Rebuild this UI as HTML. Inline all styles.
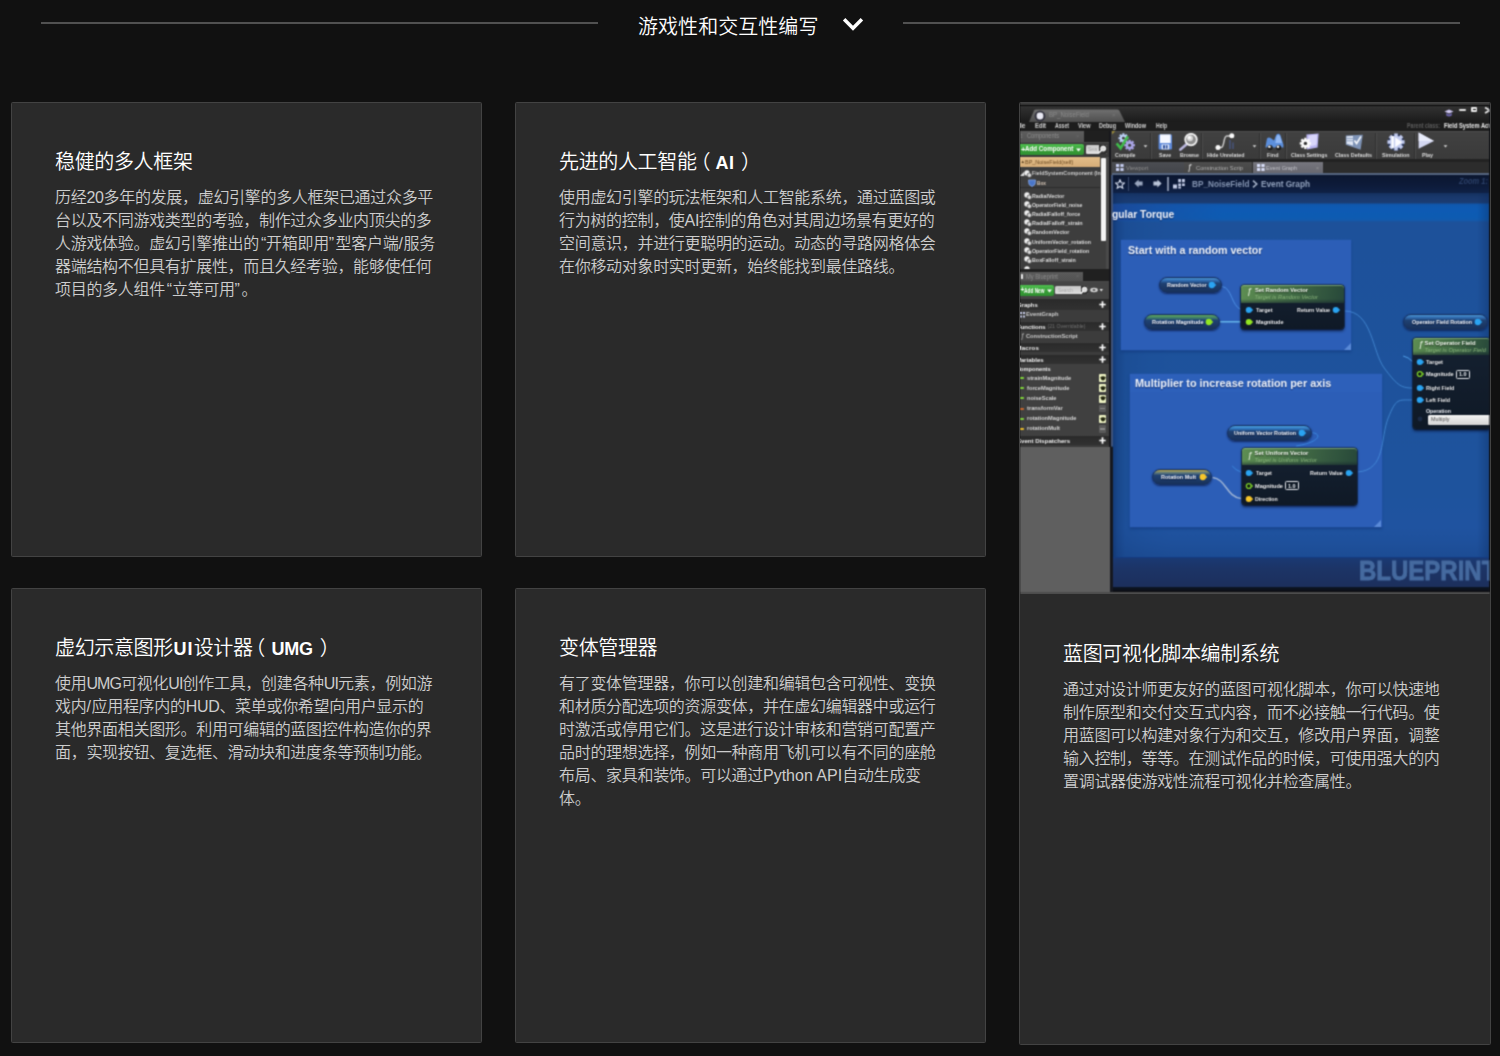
<!DOCTYPE html>
<html lang="zh-CN">
<head>
<meta charset="utf-8">
<title>游戏性和交互性编写</title>
<style>
*{box-sizing:border-box;margin:0;padding:0}
html,body{width:1500px;height:1056px;overflow:hidden;background:#111111}
body{position:relative;font-family:"Liberation Sans","Noto Sans CJK SC",sans-serif;color:#c9c9c9}
.hline{position:absolute;top:22px;height:2px;background:#515151}
.htitle{position:absolute;left:638px;top:12px;font-size:20px;line-height:30px;color:#fff;white-space:nowrap;letter-spacing:0.05px;font-weight:350}
.chev{position:absolute;left:841px;top:15px;width:24px;height:18px}
.card{position:absolute;background:#2a2a2a;border:1px solid #434343;border-radius:1.5px}
.t{position:absolute;left:43px;font-size:20px;line-height:30px;color:#fff;white-space:nowrap;letter-spacing:-0.35px;font-weight:350}
.t b{font-weight:bold;letter-spacing:-0.3px;font-size:18px}
.t .pl+b{margin-left:-0.8px}
.t .pl{position:relative;left:-7.5px}
.t .pr{position:relative;left:7.1px}
.l i{font-style:normal}
.l .q1{margin-left:1.9px;letter-spacing:-0.1px}
.l .q2{margin-right:1.9px;margin-left:-0.2px}
.l .s{letter-spacing:0.7px}
.l .n{letter-spacing:-0.85px}
.l .w{letter-spacing:0px}
.l{position:absolute;left:43px;font-size:16px;line-height:23px;white-space:nowrap;letter-spacing:-0.31px;color:#cdcdcd;font-weight:350}
#bp{position:absolute;left:0;top:0;width:470px;height:491px;overflow:hidden;background:#2a2a2a;font-family:"Liberation Sans",sans-serif;font-weight:bold}
#bpi{position:absolute;left:0;top:0;width:470px;height:491px;filter:url(#soft);will-change:transform}
#bpi>div,#bpi>span,#bpi>svg{position:absolute;display:block}
#bpi>span{white-space:nowrap}
</style>
</head>
<body>
<svg width="0" height="0" style="position:absolute"><defs><filter id="soft" x="0" y="0" width="100%" height="100%" color-interpolation-filters="sRGB"><feConvolveMatrix order="3" kernelMatrix="0.0439 0.1217 0.0439 0.1217 0.3377 0.1217 0.0439 0.1217 0.0439" divisor="1" edgeMode="duplicate" preserveAlpha="true"/></filter></defs></svg>
<!-- header -->
<div class="hline" style="left:41px;width:557px"></div>
<div class="hline" style="left:903px;width:557px"></div>
<div class="htitle">游戏性和交互性编写</div>
<svg class="chev" viewBox="0 0 24 18"><path d="M3.1 4.3 L12 13.3 L20.9 4.3" fill="none" stroke="#fff" stroke-width="3.5" stroke-linecap="butt" stroke-linejoin="miter"/></svg>

<!-- card 1 -->
<div class="card" id="c1" style="left:11px;top:102px;width:471px;height:455px">
  <div class="t" style="top:44px">稳健的多人框架</div>
  <div class="l" style="top:83px">历经20多年的发展，虚幻引擎的多人框架已通过众多平</div>
  <div class="l" style="top:106px">台以及不同游戏类型的考验，制作过众多业内顶尖的多</div>
  <div class="l" style="top:129px">人游戏体验。虚幻引擎推出的<i class="q1">“</i>开箱即用<i class="q2">”</i>型客户端<i class="s">/</i>服务</div>
  <div class="l" style="top:152px">器端结构不但具有扩展性，而且久经考验，能够使任何</div>
  <div class="l" style="top:175px">项目的多人组件<i class="q1">“</i>立等可用<i class="q2">”</i>。</div>
</div>

<!-- card 2 -->
<div class="card" id="c2" style="left:515px;top:102px;width:471px;height:455px">
  <div class="t" style="top:44px">先进的人工智能<span class="pl" style="left:-6.2px">（</span><b style="letter-spacing:0.7px">AI</b><span class="pr" style="left:6.2px">）</span></div>
  <div class="l" style="top:83px">使用虚幻引擎的玩法框架和人工智能系统，通过蓝图或</div>
  <div class="l" style="top:106px">行为树的控制，使AI控制的角色对其周边场景有更好的</div>
  <div class="l" style="top:129px">空间意识，并进行更聪明的运动。动态的寻路网格体会</div>
  <div class="l" style="top:152px">在你移动对象时实时更新，始终能找到最佳路线。</div>
</div>

<!-- card 3 -->
<div class="card" id="c3" style="left:11px;top:588px;width:471px;height:455px">
  <div class="t" style="top:44px">虚幻示意图形<b style="letter-spacing:1.1px;margin-left:0.6px">UI</b>设计器<span class="pl">（</span><b>UMG</b><span class="pr">）</span></div>
  <div class="l" style="top:83px">使用<i class="n">UMG</i>可视化<i class="n">UI</i>创作工具，创建各种<i class="n">UI</i>元素，例如游</div>
  <div class="l" style="top:106px">戏内<i class="s">/</i>应用程序内的HUD、菜单或你希望向用户显示的</div>
  <div class="l" style="top:129px">其他界面相关图形。利用可编辑的蓝图控件构造你的界</div>
  <div class="l" style="top:152px">面，实现按钮、复选框、滑动块和进度条等预制功能。</div>
</div>

<!-- card 4 -->
<div class="card" id="c4" style="left:515px;top:588px;width:471px;height:455px">
  <div class="t" style="top:44px">变体管理器</div>
  <div class="l" style="top:83px">有了变体管理器，你可以创建和编辑包含可视性、变换</div>
  <div class="l" style="top:106px">和材质分配选项的资源变体，并在虚幻编辑器中或运行</div>
  <div class="l" style="top:129px">时激活或停用它们。这是进行设计审核和营销可配置产</div>
  <div class="l" style="top:152px">品时的理想选择，例如一种商用飞机可以有不同的座舱</div>
  <div class="l" style="top:175px">布局、家具和装饰。可以通过<i class="w">Python API</i>自动生成变</div>
  <div class="l" style="top:198px">体。</div>
</div>

<!-- card 5 (tall) -->
<div class="card" id="c5" style="left:1019px;top:102px;width:472px;height:943px">
  <div id="bp"><div id="bpi">
<div style="left:0px;top:0px;width:470px;height:1.8px;background:#3c3c3c;"></div>
<div style="left:0px;top:1.7px;width:470px;height:1.5px;background:#030303;"></div>
<div style="left:0px;top:3px;width:470px;height:15.5px;background:linear-gradient(#323232,#1b1b1b);"></div>
<svg style="left:9px;top:6px" width="96" height="13" viewBox="0 0 96 13"><defs><linearGradient id="tg" x1="0" y1="0" x2="0" y2="1"><stop offset="0" stop-color="#707070"/><stop offset="1" stop-color="#4e4e4e"/></linearGradient></defs><path d="M0 13 L5 1.5 Q5.6 0.5 7 0.5 L88 0.5 Q89.6 0.5 90.4 1.8 L96 13 Z" fill="url(#tg)"/><circle cx="11" cy="7" r="3.4" fill="#e9e9f4"/><circle cx="11" cy="7" r="4.6" fill="none" stroke="#2a2a3a" stroke-width="1.4"/></svg>
<span style="left:29px;top:8.44px;font-size:6.5px;line-height:8.12px;color:#8a8a8a;font-weight:normal;transform-origin:0 50%;transform:scaleX(0.930);">BP_NoiseField</span>
<span style="left:92px;top:8.75px;font-size:6px;line-height:7.5px;color:#777;font-weight:normal;">×</span>
<div style="left:439px;top:5.8px;width:6.8px;height:2.2px;background:#e4e4e4;border-radius:1px;"></div>
<div style="left:451px;top:4px;width:6.2px;height:4.5px;background:#e9e9e9;border-radius:1px;"></div>
<div style="left:452.6px;top:6px;width:3.2px;height:1.2px;background:#1a1a1a;"></div>
<svg style="left:464px;top:3.6px" width="8" height="8" viewBox="0 0 8 8"><path d="M1 0.5 L6 3.2 L1 6" fill="none" stroke="#eee" stroke-width="1.6"/></svg>
<svg style="left:423.5px;top:5.5px" width="10" height="9" viewBox="0 0 10 9"><path d="M0.5 2.5 L5 0.5 L9.5 2.5 L5 4.6 Z" fill="#cfc8f2"/><path d="M2.2 4 L2.2 6.6 Q5 8.6 7.8 6.6 L7.8 4 L5 5.4 Z" fill="#6a62a8"/></svg>
<div style="left:0px;top:18.5px;width:470px;height:9.5px;background:#1d1d1d;"></div>
<span style="left:-2px;top:19.17px;font-size:6.6px;line-height:8.25px;color:#d4d4d4;letter-spacing:0.08px;">ile</span>
<span style="left:14.5px;top:19.17px;font-size:6.6px;line-height:8.25px;color:#d4d4d4;transform-origin:0 50%;transform:scaleX(0.882);">Edit</span>
<span style="left:34.5px;top:19.17px;font-size:6.6px;line-height:8.25px;color:#d4d4d4;transform-origin:0 50%;transform:scaleX(0.779);">Asset</span>
<span style="left:57.5px;top:19.17px;font-size:6.6px;line-height:8.25px;color:#d4d4d4;transform-origin:0 50%;transform:scaleX(0.838);">View</span>
<span style="left:79px;top:19.17px;font-size:6.6px;line-height:8.25px;color:#d4d4d4;transform-origin:0 50%;transform:scaleX(0.828);">Debug</span>
<span style="left:105px;top:19.17px;font-size:6.6px;line-height:8.25px;color:#d4d4d4;transform-origin:0 50%;transform:scaleX(0.832);">Window</span>
<span style="left:135.5px;top:19.17px;font-size:6.6px;line-height:8.25px;color:#d4d4d4;transform-origin:0 50%;transform:scaleX(0.769);">Help</span>
<span style="left:387px;top:19.3px;font-size:6.4px;line-height:8px;color:#5e5e5e;transform-origin:0 50%;transform:scaleX(0.828);">Parent class:</span>
<span style="left:424px;top:19.17px;font-size:6.6px;line-height:8.25px;color:#ededed;transform-origin:0 50%;transform:scaleX(0.873);">Field System Actor</span>
<div style="left:0px;top:28px;width:91.6px;height:463px;background:#3e3e3e;"></div>
<div style="left:64px;top:28px;width:24.5px;height:12px;background:#1f1f1f;"></div>
<div style="left:0px;top:28px;width:64px;height:10.6px;background:linear-gradient(#5d5d5d,#535353);"></div>
<div style="left:0px;top:38.6px;width:88.5px;height:1.8px;background:#4a4a4a;"></div>
<span style="left:7px;top:29.4px;font-size:6.4px;line-height:8px;color:#8e8e8e;font-weight:normal;transform-origin:0 50%;transform:scaleX(0.882);">Components</span>
<span style="left:1px;top:29.65px;font-size:6px;line-height:7.5px;color:#aaa;font-weight:normal;">⁝</span>
<span style="left:56px;top:29.96px;font-size:5.5px;line-height:6.88px;color:#6a6a6a;font-weight:normal;">×</span>
<div style="left:0px;top:40.4px;width:88.5px;height:13.2px;background:#3a3a3a;"></div>
<div style="left:0px;top:41.2px;width:64px;height:11.1px;background:linear-gradient(#4fc04f,#3aa23a 45%,#2f8f31);border-radius:0 2px 2px 0;"></div>
<span style="left:1px;top:42.11px;font-size:7.5px;line-height:9.38px;color:#fff;">+</span>
<span style="left:4.5px;top:42.49px;font-size:6.9px;line-height:8.62px;color:#fff;transform-origin:0 50%;transform:scaleX(0.904);">Add Component</span>
<svg style="left:55.5px;top:45.3px" width="5" height="4" viewBox="0 0 5 4"><path d="M0 0.5 L5 0.5 L2.5 3.6 Z" fill="#fff"/></svg>
<div style="left:66px;top:42.4px;width:21.2px;height:8.8px;background:linear-gradient(#c9c9c9,#e2e2e2);border-radius:1.5px;"></div>
<span style="left:68px;top:43.4px;font-size:5.6px;line-height:7px;color:#a5a5a5;font-weight:normal;transform-origin:0 50%;transform:scaleX(0.903);">Sea</span>
<div style="left:78.6px;top:42.4px;width:8.6px;height:8.8px;background:#2e2e2e;border-radius:0 1.5px 1.5px 0;"></div>
<svg style="left:78.4px;top:42.4px" width="9" height="9" viewBox="0 0 9 9"><circle cx="5.2" cy="3.6" r="2.5" fill="#dcdcdc" stroke="#fff" stroke-width="1"/><path d="M3.4 5.4 L0.8 8" stroke="#fff" stroke-width="1.5"/></svg>
<div style="left:0px;top:54.4px;width:79.7px;height:9.4px;background:linear-gradient(#e2bd88,#d6ad78);"></div>
<span style="left:0.4px;top:56.39px;font-size:4.5px;line-height:5.62px;color:#5a4020;font-weight:normal;">▲</span>
<span style="left:4.5px;top:55.32px;font-size:6.2px;line-height:7.75px;color:#6b4a22;font-weight:normal;transform-origin:0 50%;transform:scaleX(0.885);">BP_NoiseField(self)</span>
<div style="left:0px;top:63.8px;width:79.7px;height:101.7px;background:#3d3d3d;"></div>
<div style="left:0px;top:84.2px;width:79.7px;height:1.2px;background:#2b2b2b;"></div>
<div style="left:80.8px;top:55.2px;width:5px;height:82.8px;background:#f4f4f4;border-radius:1px;"></div>
<div style="left:85.8px;top:54px;width:3.2px;height:111.5px;background:#4a4a4a;"></div>
<div style="left:87px;top:165.5px;width:2px;height:178.1px;background:#4d4d4d;"></div>
<div style="left:89px;top:28px;width:2.2px;height:463px;background:#17171c;"></div>
<span style="left:0.3px;top:67.97px;font-size:4.2px;line-height:5.25px;color:#ddd;font-weight:normal;">◢</span>
<svg style="left:4px;top:66.8px" width="8" height="8" viewBox="0 0 8 8"><circle cx="3" cy="3" r="2.7" fill="#f1f1f1"/><circle cx="5.4" cy="5.2" r="2.3" fill="#d6d6d6" stroke="#3d3d3d" stroke-width="0.7"/></svg>
<span style="left:12px;top:67.24px;font-size:5.7px;line-height:7.12px;color:#cfcfcf;transform-origin:0 50%;transform:scaleX(0.935);">FieldSystemComponent (In</span>
<svg style="left:8px;top:76.2px" width="8" height="8" viewBox="0 0 8 8"><path d="M0.5 1 L7.5 1 L7 5.4 L4 7.6 L1 5.4 Z" fill="#4a76c8" stroke="#86a8e8" stroke-width="0.8"/></svg>
<span style="left:17px;top:76.84px;font-size:5.7px;line-height:7.12px;color:#d8c8b8;transform-origin:0 50%;transform:scaleX(0.836);">Box</span>
<svg style="left:4px;top:88.8px" width="8" height="8" viewBox="0 0 8 8"><circle cx="3" cy="3" r="2.7" fill="#f1f1f1"/><circle cx="5.4" cy="5.2" r="2.3" fill="#d6d6d6" stroke="#3d3d3d" stroke-width="0.7"/></svg>
<span style="left:12px;top:89.74px;font-size:5.7px;line-height:7.12px;color:#dedede;transform-origin:0 50%;transform:scaleX(0.938);">RadialVector</span>
<svg style="left:4px;top:97.9px" width="8" height="8" viewBox="0 0 8 8"><circle cx="3" cy="3" r="2.7" fill="#f1f1f1"/><circle cx="5.4" cy="5.2" r="2.3" fill="#d6d6d6" stroke="#3d3d3d" stroke-width="0.7"/></svg>
<span style="left:12px;top:98.84px;font-size:5.7px;line-height:7.12px;color:#dedede;transform-origin:0 50%;transform:scaleX(0.913);">OperatorField_noise</span>
<svg style="left:4px;top:107px" width="8" height="8" viewBox="0 0 8 8"><circle cx="3" cy="3" r="2.7" fill="#f1f1f1"/><circle cx="5.4" cy="5.2" r="2.3" fill="#d6d6d6" stroke="#3d3d3d" stroke-width="0.7"/></svg>
<span style="left:12px;top:107.94px;font-size:5.7px;line-height:7.12px;color:#dedede;transform-origin:0 50%;transform:scaleX(0.941);">RadialFalloff_force</span>
<svg style="left:4px;top:116px" width="8" height="8" viewBox="0 0 8 8"><circle cx="3" cy="3" r="2.7" fill="#f1f1f1"/><circle cx="5.4" cy="5.2" r="2.3" fill="#d6d6d6" stroke="#3d3d3d" stroke-width="0.7"/></svg>
<span style="left:12px;top:116.94px;font-size:5.7px;line-height:7.12px;color:#dedede;transform-origin:0 50%;transform:scaleX(0.957);">RadialFalloff_strain</span>
<svg style="left:4px;top:125.4px" width="8" height="8" viewBox="0 0 8 8"><circle cx="3" cy="3" r="2.7" fill="#f1f1f1"/><circle cx="5.4" cy="5.2" r="2.3" fill="#d6d6d6" stroke="#3d3d3d" stroke-width="0.7"/></svg>
<span style="left:12px;top:126.34px;font-size:5.7px;line-height:7.12px;color:#dedede;transform-origin:0 50%;transform:scaleX(0.932);">RandomVector</span>
<svg style="left:4px;top:134.8px" width="8" height="8" viewBox="0 0 8 8"><circle cx="3" cy="3" r="2.7" fill="#f1f1f1"/><circle cx="5.4" cy="5.2" r="2.3" fill="#d6d6d6" stroke="#3d3d3d" stroke-width="0.7"/></svg>
<span style="left:12px;top:135.74px;font-size:5.7px;line-height:7.12px;color:#dedede;transform-origin:0 50%;transform:scaleX(0.927);">UniformVector_rotation</span>
<svg style="left:4px;top:143.9px" width="8" height="8" viewBox="0 0 8 8"><circle cx="3" cy="3" r="2.7" fill="#f1f1f1"/><circle cx="5.4" cy="5.2" r="2.3" fill="#d6d6d6" stroke="#3d3d3d" stroke-width="0.7"/></svg>
<span style="left:12px;top:144.84px;font-size:5.7px;line-height:7.12px;color:#dedede;transform-origin:0 50%;transform:scaleX(0.929);">OperatorField_rotation</span>
<svg style="left:4px;top:153.2px" width="8" height="8" viewBox="0 0 8 8"><circle cx="3" cy="3" r="2.7" fill="#f1f1f1"/><circle cx="5.4" cy="5.2" r="2.3" fill="#d6d6d6" stroke="#3d3d3d" stroke-width="0.7"/></svg>
<span style="left:12px;top:154.14px;font-size:5.7px;line-height:7.12px;color:#dedede;transform-origin:0 50%;transform:scaleX(0.941);">BoxFalloff_strain</span>
<svg style="left:4px;top:162.5px" width="8" height="3" viewBox="0 0 8 3"><circle cx="3" cy="3" r="2.7" fill="#f1f1f1"/></svg>
<div style="left:0px;top:165.5px;width:88.6px;height:13.5px;background:#202020;"></div>
<div style="left:0px;top:168.6px;width:63px;height:9.8px;background:linear-gradient(#5b5b5b,#525252);"></div>
<div style="left:0px;top:178.2px;width:88.6px;height:1.2px;background:#484848;"></div>
<div style="left:0.6px;top:171px;width:2.8px;height:5px;background:#e6e6e6;border-radius:0.6px;"></div>
<span style="left:6px;top:169.6px;font-size:6.4px;line-height:8px;color:#8c8c8c;font-weight:normal;transform-origin:0 50%;transform:scaleX(0.900);">My Blueprint</span>
<span style="left:56px;top:170.16px;font-size:5.5px;line-height:6.88px;color:#6a6a6a;font-weight:normal;">×</span>
<div style="left:0px;top:179.4px;width:88.6px;height:16.2px;background:#444;"></div>
<div style="left:0px;top:182px;width:34px;height:10.8px;background:linear-gradient(#4fc04f,#3aa23a 45%,#2f8f31);border-radius:0 2px 2px 0;"></div>
<span style="left:0.6px;top:183.44px;font-size:6.5px;line-height:8.12px;color:#fff;">+</span>
<span style="left:4px;top:183.56px;font-size:6.3px;line-height:7.88px;color:#fff;transform-origin:0 50%;transform:scaleX(0.761);">Add New</span>
<svg style="left:27px;top:186px" width="5" height="4" viewBox="0 0 5 4"><path d="M0 0.5 L5 0.5 L2.5 3.6 Z" fill="#fff"/></svg>
<div style="left:35.2px;top:183px;width:32.6px;height:8.2px;background:linear-gradient(#c6c6c6,#dedede);border-radius:1.5px;"></div>
<span style="left:38px;top:183.93px;font-size:5.4px;line-height:6.75px;color:#a8a8a8;font-weight:normal;transform-origin:0 50%;transform:scaleX(0.877);">Search</span>
<div style="left:60.6px;top:183px;width:7.2px;height:8.2px;background:#2c2c2c;border-radius:0 1.5px 1.5px 0;"></div>
<svg style="left:60.3px;top:183px" width="8" height="9" viewBox="0 0 8 9"><circle cx="4.6" cy="3.6" r="2.4" fill="#dcdcdc" stroke="#fff" stroke-width="1"/><path d="M3 5.3 L0.8 7.8" stroke="#fff" stroke-width="1.4"/></svg>
<svg style="left:70.4px;top:184.4px" width="14" height="6" viewBox="0 0 14 6"><ellipse cx="4" cy="3" rx="3.8" ry="2.2" fill="#d8d8d8"/><ellipse cx="4" cy="3" rx="1.6" ry="1.1" fill="#555"/><path d="M9.6 2 L13 2 L11.3 4.4 Z" fill="#e8e8e8"/></svg>
<div style="left:0px;top:196.4px;width:88.6px;height:10.2px;background:linear-gradient(#2a2a2a,#313131);"></div>
<span style="left:-3.5px;top:198.39px;font-size:6.1px;line-height:7.62px;color:#f0f0f0;transform-origin:0 50%;transform:scaleX(0.969);">Graphs</span>
<svg style="left:78.6px;top:198px" width="7" height="7" viewBox="0 0 7 7"><path d="M3.5 0.3 V6.7 M0.3 3.5 H6.7" stroke="#fff" stroke-width="1.7"/></svg>
<div style="left:0px;top:206.6px;width:88.6px;height:11px;background:#3c3c3c;"></div>
<svg style="left:0.2px;top:209.2px" width="5" height="6" viewBox="0 0 5 6"><path d="M0 0H2V2H0Z M3 0H5V2H3Z M0 3.4H2V5.6H0Z M3 3.4H5V5.6H3Z" fill="#c8cde8"/></svg>
<span style="left:6.4px;top:208.38px;font-size:5.8px;line-height:7.25px;color:#cdcdcd;transform-origin:0 50%;transform:scaleX(0.986);">EventGraph</span>
<div style="left:0px;top:218.6px;width:88.6px;height:9.2px;background:linear-gradient(#2a2a2a,#313131);"></div>
<span style="left:-3.5px;top:220.09px;font-size:6.1px;line-height:7.62px;color:#f0f0f0;transform-origin:0 50%;transform:scaleX(0.985);">Functions</span>
<svg style="left:78.6px;top:219.7px" width="7" height="7" viewBox="0 0 7 7"><path d="M3.5 0.3 V6.7 M0.3 3.5 H6.7" stroke="#fff" stroke-width="1.7"/></svg>
<span style="left:27.4px;top:220.35px;font-size:5.2px;line-height:6.5px;color:#707070;font-weight:normal;letter-spacing:0.04px;">(21 Overridable)</span>
<div style="left:0px;top:227.8px;width:88.6px;height:11.6px;background:#3c3c3c;"></div>
<span style="left:0.4px;top:229.02px;font-size:7px;line-height:8.75px;color:#bbb;font-weight:normal;font-style:italic;">ƒ</span>
<span style="left:6.4px;top:229.98px;font-size:5.8px;line-height:7.25px;color:#cdcdcd;transform-origin:0 50%;transform:scaleX(0.982);">ConstructionScript</span>
<div style="left:0px;top:240.2px;width:88.6px;height:8.6px;background:linear-gradient(#2a2a2a,#313131);"></div>
<span style="left:-3.5px;top:241.39px;font-size:6.1px;line-height:7.62px;color:#f0f0f0;letter-spacing:0.19px;">Macros</span>
<svg style="left:78.6px;top:241px" width="7" height="7" viewBox="0 0 7 7"><path d="M3.5 0.3 V6.7 M0.3 3.5 H6.7" stroke="#fff" stroke-width="1.7"/></svg>
<div style="left:0px;top:248.8px;width:88.6px;height:2.8px;background:#3c3c3c;"></div>
<div style="left:0px;top:251.6px;width:88.6px;height:9px;background:linear-gradient(#2a2a2a,#313131);"></div>
<span style="left:-3.5px;top:252.99px;font-size:6.1px;line-height:7.62px;color:#f0f0f0;transform-origin:0 50%;transform:scaleX(0.997);">Variables</span>
<svg style="left:78.6px;top:252.6px" width="7" height="7" viewBox="0 0 7 7"><path d="M3.5 0.3 V6.7 M0.3 3.5 H6.7" stroke="#fff" stroke-width="1.7"/></svg>
<div style="left:0px;top:260.6px;width:88.6px;height:72px;background:#404040;"></div>
<span style="left:-4.5px;top:262.32px;font-size:6.2px;line-height:7.75px;color:#ececec;transform-origin:0 50%;transform:scaleX(0.916);">Components</span>
<div style="left:-0.4px;top:273.8px;width:4.6px;height:2.2px;background:#7fd33a;border-radius:0.8px;"></div>
<span style="left:7px;top:271.57px;font-size:5.8px;line-height:7.25px;color:#d6d6d6;transform-origin:0 50%;transform:scaleX(0.987);">strainMagnitude</span>
<div style="left:78.6px;top:271.2px;width:7.8px;height:8px;background:#eef3c4;border-radius:1px;"></div>
<svg style="left:79.5px;top:273px" width="6" height="5" viewBox="0 0 6 5"><path d="M0.2 1.2 Q3 -0.6 5.8 1.2 Q4.6 4.6 3 4.6 Q1.4 4.6 0.2 1.2Z" fill="#22260f"/></svg>
<div style="left:-0.4px;top:284px;width:4.6px;height:2.2px;background:#7fd33a;border-radius:0.8px;"></div>
<span style="left:7px;top:281.77px;font-size:5.8px;line-height:7.25px;color:#d6d6d6;transform-origin:0 50%;transform:scaleX(0.984);">forceMagnitude</span>
<div style="left:78.6px;top:281.4px;width:7.8px;height:8px;background:#eef3c4;border-radius:1px;"></div>
<svg style="left:79.5px;top:283.2px" width="6" height="5" viewBox="0 0 6 5"><path d="M0.2 1.2 Q3 -0.6 5.8 1.2 Q4.6 4.6 3 4.6 Q1.4 4.6 0.2 1.2Z" fill="#22260f"/></svg>
<div style="left:-0.4px;top:294.2px;width:4.6px;height:2.2px;background:#7fd33a;border-radius:0.8px;"></div>
<span style="left:7px;top:291.98px;font-size:5.8px;line-height:7.25px;color:#d6d6d6;transform-origin:0 50%;transform:scaleX(0.973);">noiseScale</span>
<div style="left:78.6px;top:291.6px;width:7.8px;height:8px;background:#eef3c4;border-radius:1px;"></div>
<svg style="left:79.5px;top:293.4px" width="6" height="5" viewBox="0 0 6 5"><path d="M0.2 1.2 Q3 -0.6 5.8 1.2 Q4.6 4.6 3 4.6 Q1.4 4.6 0.2 1.2Z" fill="#22260f"/></svg>
<div style="left:-0.4px;top:304.5px;width:4.6px;height:2.2px;background:#c8662c;border-radius:0.8px;"></div>
<span style="left:7px;top:302.27px;font-size:5.8px;line-height:7.25px;color:#d6d6d6;transform-origin:0 50%;transform:scaleX(0.989);">transformVar</span>
<div style="left:79px;top:302.3px;width:7px;height:7.2px;background:#5a5a5a;border-radius:1px;"></div>
<div style="left:80.4px;top:305.3px;width:4.2px;height:1.2px;background:#8a8a8a;"></div>
<div style="left:-0.4px;top:314.5px;width:4.6px;height:2.2px;background:#7fd33a;border-radius:0.8px;"></div>
<span style="left:7px;top:312.27px;font-size:5.8px;line-height:7.25px;color:#d6d6d6;transform-origin:0 50%;transform:scaleX(0.977);">rotationMagnitude</span>
<div style="left:78.6px;top:311.9px;width:7.8px;height:8px;background:#eef3c4;border-radius:1px;"></div>
<svg style="left:79.5px;top:313.7px" width="6" height="5" viewBox="0 0 6 5"><path d="M0.2 1.2 Q3 -0.6 5.8 1.2 Q4.6 4.6 3 4.6 Q1.4 4.6 0.2 1.2Z" fill="#22260f"/></svg>
<div style="left:-0.4px;top:324.6px;width:4.6px;height:2.2px;background:#e9ba28;border-radius:0.8px;"></div>
<span style="left:7px;top:322.38px;font-size:5.8px;line-height:7.25px;color:#d6d6d6;transform-origin:0 50%;transform:scaleX(0.982);">rotationMult</span>
<div style="left:79px;top:322.4px;width:7px;height:7.2px;background:#5a5a5a;border-radius:1px;"></div>
<div style="left:80.4px;top:325.4px;width:4.2px;height:1.2px;background:#8a8a8a;"></div>
<div style="left:0px;top:332.8px;width:88.6px;height:9.6px;background:linear-gradient(#2a2a2a,#313131);"></div>
<span style="left:-3.5px;top:334.49px;font-size:6.1px;line-height:7.62px;color:#f0f0f0;transform-origin:0 50%;transform:scaleX(0.998);">Event Dispatchers</span>
<svg style="left:78.6px;top:334.1px" width="7" height="7" viewBox="0 0 7 7"><path d="M3.5 0.3 V6.7 M0.3 3.5 H6.7" stroke="#fff" stroke-width="1.7"/></svg>
<div style="left:0px;top:342.4px;width:88.6px;height:1.2px;background:#3a3a3a;"></div>
<div style="left:0px;top:343.6px;width:89.6px;height:147.4px;background:#5f5f5f;"></div>
<div style="left:91.8px;top:28px;width:378.2px;height:29px;background:linear-gradient(#414141,#3a3a3a);"></div>
<div style="left:91.8px;top:56.4px;width:378.2px;height:2.2px;background:#222;"></div>
<div style="left:91.8px;top:28px;width:378.2px;height:1px;background:#4e4e4e;"></div>
<svg style="left:91.8px;top:28px" width="4" height="4" viewBox="0 0 4 4"><path d="M0 0H3.4L0 3.4Z" fill="#9a8a3a"/></svg>
<div style="left:131.3px;top:29.5px;width:1px;height:26px;background:#4c4c4c;"></div>
<div style="left:130.3px;top:29.5px;width:1px;height:26px;background:#303030;"></div>
<div style="left:181.8px;top:29.5px;width:1px;height:26px;background:#4c4c4c;"></div>
<div style="left:180.8px;top:29.5px;width:1px;height:26px;background:#303030;"></div>
<div style="left:240.3px;top:29.5px;width:1px;height:26px;background:#4c4c4c;"></div>
<div style="left:239.3px;top:29.5px;width:1px;height:26px;background:#303030;"></div>
<div style="left:266px;top:29.5px;width:1px;height:26px;background:#4c4c4c;"></div>
<div style="left:265px;top:29.5px;width:1px;height:26px;background:#303030;"></div>
<div style="left:355.8px;top:29.5px;width:1px;height:26px;background:#4c4c4c;"></div>
<div style="left:354.8px;top:29.5px;width:1px;height:26px;background:#303030;"></div>
<div style="left:395px;top:29.5px;width:1px;height:26px;background:#4c4c4c;"></div>
<div style="left:394px;top:29.5px;width:1px;height:26px;background:#303030;"></div>
<span style="left:95px;top:48.51px;font-size:5.9px;line-height:7.38px;color:#dcdcdc;transform-origin:0 50%;transform:scaleX(0.881);">Compile</span>
<span style="left:138.5px;top:48.51px;font-size:5.9px;line-height:7.38px;color:#dcdcdc;transform-origin:0 50%;transform:scaleX(0.871);">Save</span>
<span style="left:159.5px;top:48.51px;font-size:5.9px;line-height:7.38px;color:#dcdcdc;transform-origin:0 50%;transform:scaleX(0.891);">Browse</span>
<span style="left:186.5px;top:48.51px;font-size:5.9px;line-height:7.38px;color:#dcdcdc;transform-origin:0 50%;transform:scaleX(0.901);">Hide Unrelated</span>
<span style="left:247px;top:48.51px;font-size:5.9px;line-height:7.38px;color:#dcdcdc;transform-origin:0 50%;transform:scaleX(0.924);">Find</span>
<span style="left:270.5px;top:48.51px;font-size:5.9px;line-height:7.38px;color:#dcdcdc;transform-origin:0 50%;transform:scaleX(0.898);">Class Settings</span>
<span style="left:315px;top:48.51px;font-size:5.9px;line-height:7.38px;color:#dcdcdc;transform-origin:0 50%;transform:scaleX(0.910);">Class Defaults</span>
<span style="left:361.8px;top:48.51px;font-size:5.9px;line-height:7.38px;color:#dcdcdc;transform-origin:0 50%;transform:scaleX(0.915);">Simulation</span>
<span style="left:401.7px;top:48.51px;font-size:5.9px;line-height:7.38px;color:#dcdcdc;transform-origin:0 50%;transform:scaleX(0.915);">Play</span>
<svg style="left:123.2px;top:41.6px" width="5" height="3" viewBox="0 0 5 3"><path d="M0.6 0.2H4.4L2.5 2.6Z" fill="#d8d8d8"/></svg>
<svg style="left:231.8px;top:41.6px" width="5" height="3" viewBox="0 0 5 3"><path d="M0.6 0.2H4.4L2.5 2.6Z" fill="#d8d8d8"/></svg>
<svg style="left:423.4px;top:41.6px" width="5" height="3" viewBox="0 0 5 3"><path d="M0.6 0.2H4.4L2.5 2.6Z" fill="#d8d8d8"/></svg>
<svg style="left:95px;top:29.5px" width="22" height="19" viewBox="0 0 22 19"><g fill="#bcd0f6"><circle cx="8.4" cy="5.2" r="3.6"/><rect x="7.392" y="0.232" width="2.016" height="9.936" transform="rotate(0 8.4 5.2)"/><rect x="7.392" y="0.232" width="2.016" height="9.936" transform="rotate(45 8.4 5.2)"/><rect x="7.392" y="0.232" width="2.016" height="9.936" transform="rotate(90 8.4 5.2)"/><rect x="7.392" y="0.232" width="2.016" height="9.936" transform="rotate(135 8.4 5.2)"/></g><circle cx="8.4" cy="5.2" r="1.4" fill="#3b3b3b"/><g fill="#a9a4e6"><circle cx="14.6" cy="12.2" r="3.9"/><rect x="13.508" y="6.818" width="2.184" height="10.764" transform="rotate(0 14.6 12.2)"/><rect x="13.508" y="6.818" width="2.184" height="10.764" transform="rotate(45 14.6 12.2)"/><rect x="13.508" y="6.818" width="2.184" height="10.764" transform="rotate(90 14.6 12.2)"/><rect x="13.508" y="6.818" width="2.184" height="10.764" transform="rotate(135 14.6 12.2)"/></g><circle cx="14.6" cy="12.2" r="1.5" fill="#3b3b3b"/><path d="M1.6 10.4 L5.6 15.2 L12.8 3.4" fill="none" stroke="#3fba4a" stroke-width="2.6"/></svg>
<svg style="left:137.6px;top:31.4px" width="15" height="16" viewBox="0 0 15 16"><rect x="0.6" y="0.4" width="13.4" height="15" rx="1" fill="#5d88d8"/><rect x="2" y="0.4" width="10.6" height="8.6" fill="#f6f8ff"/><rect x="3.6" y="10.4" width="7.6" height="5" fill="#e8eefc"/><rect x="5" y="11.2" width="2.2" height="3.4" fill="#2c4f9c"/><rect x="8" y="11.2" width="1.6" height="3.4" fill="#2c4f9c"/></svg>
<svg style="left:159.4px;top:30.4px" width="20" height="18" viewBox="0 0 20 18"><path d="M8.2 10.8 L1.4 16.6" stroke="#b9b6dc" stroke-width="2.6" stroke-linecap="round"/><circle cx="12" cy="6.6" r="5.8" fill="#8d8d8d" stroke="#f2f2f2" stroke-width="1.8"/><circle cx="11" cy="5.2" r="3" fill="#d6d6d6"/><circle cx="10.4" cy="4.4" r="1.5" fill="#fff"/></svg>
<svg style="left:194.6px;top:30.4px" width="22" height="18" viewBox="0 0 22 18"><path d="M3 14.6 L6 14.6 C9.6 14.6 8.2 3 11.8 3 L16 3" fill="none" stroke="#c9c9c9" stroke-width="1.5"/><path d="M15 7 V16 M18 9.4 V16" stroke="#4a5a8c" stroke-width="1.2"/><circle cx="3" cy="14.6" r="2.5" fill="#fafafa"/><circle cx="16.8" cy="2.8" r="2.5" fill="#fafafa"/></svg>
<svg style="left:243.6px;top:29.6px" width="21" height="18" viewBox="0 0 21 18"><path d="M1.6 13 L3 5.6 Q4.6 3.4 7 5.2 L10 7.4 L12.2 2 Q14.4 -0.4 16.4 2.2 L19.4 11.6 L19.4 14.6 L1.6 14.6Z" fill="#5c8fdc"/><path d="M12.6 3 Q14.4 1 16 3 L18 10 L11.4 10Z" fill="#8fb6f2"/><circle cx="6" cy="14.6" r="2.7" fill="#1d1d1d"/><circle cx="14.6" cy="14.6" r="2.7" fill="#1d1d1d"/><circle cx="5.4" cy="13.8" r="1.3" fill="#f0f0f0"/><circle cx="14" cy="13.8" r="1.3" fill="#f0f0f0"/></svg>
<svg style="left:278.6px;top:30px" width="21" height="18" viewBox="0 0 21 18"><path d="M7.4 1.6 L19.6 0.4 L18.6 14.4 L8 16.6Z" fill="#b9b4f0"/><path d="M9.4 2.6 L18.2 1.6 L17.4 12 L10 13.4Z" fill="#d9d6fa"/><g fill="#fbfbfb"><circle cx="6.4" cy="10.4" r="4.1"/><rect x="5.252" y="4.742" width="2.296" height="11.316" transform="rotate(0 6.4 10.4)"/><rect x="5.252" y="4.742" width="2.296" height="11.316" transform="rotate(45 6.4 10.4)"/><rect x="5.252" y="4.742" width="2.296" height="11.316" transform="rotate(90 6.4 10.4)"/><rect x="5.252" y="4.742" width="2.296" height="11.316" transform="rotate(135 6.4 10.4)"/></g><circle cx="6.4" cy="10.4" r="1.7" fill="#2e2e2e"/></svg>
<svg style="left:325px;top:30.6px" width="19" height="17" viewBox="0 0 19 17"><path d="M0.8 1.4 L17.8 0.8 L15.6 15.8 L0.8 10.8Z" fill="#7e93b6"/><path d="M1.6 2.2 L8 2 L8 11.6 L1.6 9.8Z" fill="#dfe6f4"/><path d="M1.6 4.4 H8 M1.6 6.8 H8" stroke="#7e93b6" stroke-width="0.9"/><path d="M9.4 6.4 L11.6 9.4 L16 2.4" fill="none" stroke="#f4f6fb" stroke-width="1.7"/></svg>
<svg style="left:365.6px;top:29.6px" width="20" height="18" viewBox="0 0 20 18"><circle cx="10" cy="9.4" r="8.4" fill="#2d3a5e"/><g fill="#c4cdf0"><circle cx="10" cy="9" r="6.2"/><rect x="8.264" y="0.444" width="3.472" height="17.112" transform="rotate(0 10 9)"/><rect x="8.264" y="0.444" width="3.472" height="17.112" transform="rotate(45 10 9)"/><rect x="8.264" y="0.444" width="3.472" height="17.112" transform="rotate(90 10 9)"/><rect x="8.264" y="0.444" width="3.472" height="17.112" transform="rotate(135 10 9)"/></g><path d="M6.6 3 V15.4" stroke="#fff" stroke-width="2.2"/><path d="M9.2 4.2 L16.2 9.2 L9.2 14.2Z" fill="#fbfbff"/></svg>
<svg style="left:397.6px;top:29.4px" width="17" height="18" viewBox="0 0 17 18"><path d="M0.6 0.6 L16 9 L0.6 16.8Z" fill="#d4d8f2"/><path d="M0.6 0.6 L16 9 L0.6 9Z" fill="#e9ecfb"/></svg>
<div style="left:91.8px;top:58.6px;width:378.2px;height:11.8px;background:#2c2c2c;"></div>
<div style="left:91.8px;top:59px;width:72.2px;height:11.4px;background:linear-gradient(#4b4d52,#43454a);"></div>
<div style="left:164px;top:59px;width:68px;height:11.4px;background:linear-gradient(#4d4d4d,#454545);"></div>
<div style="left:233px;top:59px;width:70.4px;height:11.4px;background:linear-gradient(#76767e,#686870);"></div>
<div style="left:91.8px;top:70.2px;width:378.2px;height:1.4px;background:#56657f;"></div>
<svg style="left:95.6px;top:61.4px" width="8" height="7" viewBox="0 0 8 7"><path d="M0 0H3.2V3H0Z M4.4 0H7.6V3H4.4Z M0 4H3.2V7H0Z M4.4 4H7.6V7H4.4Z" fill="#c5cdf0"/></svg>
<span style="left:106.2px;top:61.12px;font-size:6.2px;line-height:7.75px;color:#8f8f8f;font-weight:normal;transform-origin:0 50%;transform:scaleX(0.933);">Viewport</span>
<span style="left:167.2px;top:59.49px;font-size:8.5px;line-height:10.62px;color:#e6e6e6;font-weight:normal;font-style:italic;">ƒ</span>
<span style="left:176px;top:61.12px;font-size:6.2px;line-height:7.75px;color:#b4b4b4;font-weight:normal;transform-origin:0 50%;transform:scaleX(0.928);">Construction Scrip</span>
<svg style="left:236.6px;top:61.4px" width="8" height="7" viewBox="0 0 8 7"><path d="M0 0H3.2V3H0Z M4.4 0H7.6V3H4.4Z M0 4H3.2V7H0Z M4.4 4H7.6V7H4.4Z" fill="#d9def8"/></svg>
<span style="left:246px;top:61.12px;font-size:6.2px;line-height:7.75px;color:#c1c1c8;font-weight:normal;transform-origin:0 50%;transform:scaleX(0.891);">Event Graph</span>
<span style="left:296px;top:61.75px;font-size:5.2px;line-height:6.5px;color:#999;font-weight:normal;">×</span>
<div style="left:91.8px;top:71.6px;width:378.2px;height:18.4px;background:linear-gradient(#0b1630,#0d1b3a 60%,#0f2146);"></div>
<svg style="left:95px;top:75.6px" width="10" height="10" viewBox="0 0 10 10"><path d="M5 0.8 L6.3 3.7 L9.4 4 L7 6.1 L7.8 9.2 L5 7.5 L2.2 9.2 L3 6.1 L0.6 4 L3.7 3.7Z" fill="none" stroke="#d8dff0" stroke-width="1.1"/></svg>
<div style="left:107.8px;top:74.4px;width:1px;height:13.2px;background:#3a4a6c;"></div>
<svg style="left:114px;top:76px" width="9" height="9" viewBox="0 0 9 9"><path d="M0.4 4.5 L4.6 0.4 L4.6 2.6 H8.6 V6.4 H4.6 V8.6Z" fill="#9aa6be"/></svg>
<svg style="left:132.6px;top:76px" width="9" height="9" viewBox="0 0 9 9"><path d="M8.6 4.5 L4.4 0.4 L4.4 2.6 H0.4 V6.4 H4.4 V8.6Z" fill="#b9c4d8"/></svg>
<div style="left:147.4px;top:74.4px;width:1.2px;height:13.2px;background:#7f8ba4;"></div>
<svg style="left:153.4px;top:75.8px" width="12" height="10" viewBox="0 0 12 10"><path d="M5.2 0H8V3.2H5.2Z M9 0H11.8V3.2H9Z M5.2 4.4H8V7H5.2Z M9 4.4H11.8V7H9Z M0 5.4H4V9.6H0Z M5.2 7.4H8V9.6H5.2Z" fill="#c3cce6"/></svg>
<span style="left:171.5px;top:74.6px;font-size:9.6px;line-height:12px;color:#8595b2;transform-origin:0 50%;transform:scaleX(0.855);">BP_NoiseField</span>
<svg style="left:232px;top:77px" width="6" height="8" viewBox="0 0 6 8"><path d="M1 0.6 L4.8 4 L1 7.4" fill="none" stroke="#a9b5cc" stroke-width="1.5"/></svg>
<span style="left:241px;top:74.6px;font-size:9.6px;line-height:12px;color:#93a3be;transform-origin:0 50%;transform:scaleX(0.858);">Event Graph</span>
<span style="left:438.6px;top:73.38px;font-size:9px;line-height:11.25px;color:#2b4068;font-style:italic;transform-origin:0 50%;transform:scaleX(0.826);">Zoom 1:</span>
<div style="left:91.8px;top:90px;width:377.4px;height:364.4px;background:linear-gradient(#14305e 0,#19386c 4px,#1b3c72 9.6px,#1057ac 11.4px,#0e5ab3 15px,#0d5bb2 24px,#115aae 27px,#1d519a 29px,#1e539d 300px,#1f53a0 334px,#1e509b 350px,#1c4c94 364px);"></div>
<div style="left:91.8px;top:90px;width:60px;height:364.4px;background:linear-gradient(90deg,rgba(10,40,90,.6),rgba(14,48,104,.36) 9%,rgba(18,56,116,.16) 22%,rgba(20,60,120,.07) 55%,rgba(20,60,120,0));"></div>
<div style="left:457.2px;top:90px;width:12px;height:364.4px;background:linear-gradient(270deg,rgba(10,40,90,.35),rgba(20,60,120,0));"></div>
<div style="left:91.8px;top:100.6px;width:110px;height:17.6px;background:linear-gradient(90deg,rgba(30,70,150,.75),rgba(30,76,156,.45) 40%,rgba(30,80,152,0));"></div>
<div style="left:90.9px;top:72px;width:1.8px;height:271px;background:#3f5378;"></div>
<div style="left:91.8px;top:454.4px;width:377.4px;height:29.6px;background:linear-gradient(#1a3a74,#1c3466 40%,#1c2f5c);"></div>
<div style="left:91.8px;top:453.8px;width:377.4px;height:1.2px;background:#143a80;"></div>
<div style="left:91.8px;top:484px;width:377.4px;height:5px;background:linear-gradient(#0b1526,#0d0d10);"></div>
<div style="left:101.2px;top:136.6px;width:229.8px;height:110.4px;background:#2c5eb7;box-shadow:0 0 1.5px #2c5eb7,0 1.5px 2.5px rgba(10,40,100,.4);"></div>
<div style="left:109.6px;top:270.6px;width:252px;height:153.7px;background:#2c5eb7;box-shadow:0 0 1.5px #2c5eb7,0 1.5px 2.5px rgba(10,40,100,.4);"></div>
<div style="left:109.6px;top:270.6px;width:252px;height:18.4px;background:#2d60ba;"></div>
<svg style="left:323.6px;top:239.6px" width="7" height="7" viewBox="0 0 7 7"><path d="M7 0 V7 H0Z" fill="#5a8ad8"/></svg>
<svg style="left:354.2px;top:417px" width="7" height="7" viewBox="0 0 7 7"><path d="M7 0 V7 H0Z" fill="#5a8ad8"/></svg>
<span style="left:91.6px;top:104.78px;font-size:10.6px;line-height:13.25px;color:#eef3fb;transform-origin:0 50%;transform:scaleX(0.975);text-shadow:0 1px 1px rgba(10,30,80,.7);">gular Torque</span>
<span style="left:108px;top:141.05px;font-size:10.8px;line-height:13.5px;color:#eef3fb;transform-origin:0 50%;transform:scaleX(0.987);text-shadow:0 1px 1px rgba(10,30,80,.7);">Start with a random vector</span>
<span style="left:115px;top:274.39px;font-size:10.9px;line-height:13.62px;color:#eef3fb;transform-origin:0 50%;transform:scaleX(0.998);text-shadow:0 1px 1px rgba(10,30,80,.7);">Multiplier to increase rotation per axis</span>
<svg style="left:91.8px;top:90px" width="377.4" height="394" viewBox="0 0 377.4 394"><path d="M110.2 93.5 C120.2 95 119.2 113 129.2 116.6" fill="none" stroke="#4f93e6" stroke-width="1" opacity="0.9"/><path d="M107.7 128.8 L129.2 128.8" fill="none" stroke="#6fc3f2" stroke-width="1.3" opacity="1"/><path d="M232.7 118 C260.2 118 260.2 159 272.2 175 S288.2 195 300.2 195" fill="none" stroke="#4a95e0" stroke-width="1" opacity="0.7"/><path d="M245.6 279 C274.2 277 268.2 245 276.2 225 S286.2 207 300.2 207" fill="none" stroke="#4a95e0" stroke-width="1" opacity="0.7"/><path d="M291.2 163 Q296.2 164 300.7 168.6" fill="none" stroke="#4f9ee8" stroke-width="1" opacity="1"/><path d="M200.2 239.6 C210.2 241 208.2 249 184.2 253" fill="none" stroke="#3f8fe4" stroke-width="1" opacity="0.8"/><path d="M120.2 273 Q123.2 277 129.7 279.4" fill="none" stroke="#3f8fe4" stroke-width="1" opacity="0.8"/><path d="M100.6 284.4 C114.2 286 114.2 304 129.2 305.4" fill="none" stroke="#9db3d4" stroke-width="1.5" opacity="1"/></svg>
<div style="left:139px;top:174px;width:63px;height:15.6px;background:linear-gradient(#4a93cf 0,#2f69ad 20%,#1f4172 38%,#18315a 100%);border-radius:8px;border:1px solid #163062;box-shadow:0 1px 2px rgba(8,20,60,.7);"></div>
<span style="left:147px;top:178.95px;font-size:6px;line-height:7.5px;color:#f2f5fb;transform-origin:0 50%;transform:scaleX(0.898);text-shadow:0 0.6px 0.8px #0a1838;">Random Vector</span>
<svg style="left:188.2px;top:177.8px" width="9" height="8" viewBox="0 0 9 8"><circle cx="3.8" cy="4" r="3.15" fill="#2aa4f2"/><path d="M6.3 2.2 L8.3 4 L6.3 5.8Z" fill="#2aa4f2"/></svg>
<div style="left:124px;top:211px;width:75.6px;height:15.6px;background:linear-gradient(#5ea45a 0,#3f7f6a 20%,#1f4172 38%,#18315a 100%);border-radius:8px;border:1px solid #163062;box-shadow:0 1px 2px rgba(8,20,60,.7);"></div>
<span style="left:132px;top:215.95px;font-size:6px;line-height:7.5px;color:#f2f5fb;transform-origin:0 50%;transform:scaleX(0.920);text-shadow:0 0.6px 0.8px #0a1838;">Rotation Magnitude</span>
<svg style="left:185.4px;top:214.8px" width="9" height="8" viewBox="0 0 9 8"><circle cx="3.8" cy="4" r="3.15" fill="#93e622"/><path d="M6.3 2.2 L8.3 4 L6.3 5.8Z" fill="#93e622"/></svg>
<div style="left:383px;top:211px;width:85.4px;height:16px;background:linear-gradient(#4a93cf 0,#2f69ad 20%,#1f4172 38%,#18315a 100%);border-radius:8px;border:1px solid #163062;box-shadow:0 1px 2px rgba(8,20,60,.7);"></div>
<span style="left:392px;top:216.15px;font-size:6px;line-height:7.5px;color:#f2f5fb;transform-origin:0 50%;transform:scaleX(0.895);text-shadow:0 0.6px 0.8px #0a1838;">Operator Field Rotation</span>
<svg style="left:453.8px;top:215px" width="9" height="8" viewBox="0 0 9 8"><circle cx="3.8" cy="4" r="3.15" fill="#2aa4f2"/><path d="M6.3 2.2 L8.3 4 L6.3 5.8Z" fill="#2aa4f2"/></svg>
<div style="left:206.7px;top:322.2px;width:85.3px;height:15.4px;background:linear-gradient(#4aa0dc 0,#2f74bd 20%,#1f4172 38%,#18315a 100%);border-radius:8px;border:1px solid #163062;box-shadow:0 1px 2px rgba(8,20,60,.7);"></div>
<span style="left:214px;top:327.05px;font-size:6px;line-height:7.5px;color:#f2f5fb;transform-origin:0 50%;transform:scaleX(0.898);text-shadow:0 0.6px 0.8px #0a1838;">Uniform Vector Rotation</span>
<svg style="left:277.8px;top:325.9px" width="9" height="8" viewBox="0 0 9 8"><circle cx="3.8" cy="4" r="3.15" fill="#2aa4f2"/><path d="M6.3 2.2 L8.3 4 L6.3 5.8Z" fill="#2aa4f2"/></svg>
<div style="left:132px;top:365.6px;width:60px;height:16px;background:linear-gradient(#b9a548 0,#5f7a7c 20%,#1f4172 38%,#18315a 100%);border-radius:8px;border:1px solid #163062;box-shadow:0 1px 2px rgba(8,20,60,.7);"></div>
<span style="left:141px;top:370.75px;font-size:6px;line-height:7.5px;color:#f2f5fb;transform-origin:0 50%;transform:scaleX(0.913);text-shadow:0 0.6px 0.8px #0a1838;">Rotation Mult</span>
<svg style="left:178.6px;top:369.6px" width="9" height="8" viewBox="0 0 9 8"><circle cx="3.8" cy="4" r="3.15" fill="#f7c62a"/><path d="M6.3 2.2 L8.3 4 L6.3 5.8Z" fill="#f7c62a"/></svg>
<div style="left:221px;top:181.5px;width:103.1px;height:44px;background:linear-gradient(#152131,#0f1926);border-radius:3px;box-shadow:0 0 0 0.6px #0a1424,0 1.5px 3px rgba(5,12,40,.75);"></div>
<div style="left:221px;top:181.5px;width:103.1px;height:18.5px;background:linear-gradient(100deg,rgba(98,148,84,.95) 0,rgba(76,122,74,.9) 40%,rgba(42,78,60,.85) 100%),#16222e;border-radius:3px 3px 0 0;box-shadow:inset 0 1px 0 rgba(170,215,150,.55);"></div>
<div style="left:220.5px;top:196px;width:104.1px;height:4px;background:linear-gradient(rgba(20,34,44,0),rgba(20,34,44,.55));"></div>
<span style="left:226.7px;top:182.46px;font-size:9.5px;line-height:11.88px;color:#e9f3e2;font-weight:normal;font-style:italic;">ƒ</span>
<span style="left:234.5px;top:183.91px;font-size:5.9px;line-height:7.38px;color:#f1f6ee;transform-origin:0 50%;transform:scaleX(0.980);text-shadow:0 0.6px 0.8px #1a3018;">Set Random Vector</span>
<span style="left:234.5px;top:191.04px;font-size:5.7px;line-height:7.12px;color:#86b078;font-weight:normal;font-style:italic;letter-spacing:0.04px;">Target is Random Vector</span>
<svg style="left:225.2px;top:203.2px" width="9" height="8" viewBox="0 0 9 8"><circle cx="3.8" cy="4" r="3.05" fill="#2aa4f2"/><path d="M6.2 2.2 L8.2 4 L6.2 5.8Z" fill="#2aa4f2"/></svg>
<span style="left:235.5px;top:204.41px;font-size:5.9px;line-height:7.38px;color:#eef1f6;transform-origin:0 50%;transform:scaleX(0.938);text-shadow:0 0 1px #000;">Target</span>
<span style="left:276.5px;top:204.41px;font-size:5.9px;line-height:7.38px;color:#eef1f6;transform-origin:0 50%;transform:scaleX(0.915);text-shadow:0 0 1px #000;">Return Value</span>
<svg style="left:311.6px;top:203.2px" width="9" height="8" viewBox="0 0 9 8"><circle cx="3.8" cy="4" r="3.05" fill="#2aa4f2"/><path d="M6.2 2.2 L8.2 4 L6.2 5.8Z" fill="#2aa4f2"/></svg>
<svg style="left:225px;top:215px" width="9" height="8" viewBox="0 0 9 8"><circle cx="3.8" cy="4" r="3.05" fill="#93e622"/><path d="M6.2 2.2 L8.2 4 L6.2 5.8Z" fill="#93e622"/></svg>
<span style="left:235.5px;top:216.21px;font-size:5.9px;line-height:7.38px;color:#eef1f6;transform-origin:0 50%;transform:scaleX(0.932);text-shadow:0 0 1px #000;">Magnitude</span>
<div style="left:392.5px;top:234.5px;width:77.5px;height:91px;background:linear-gradient(#152131,#0f1926);border-radius:3px;box-shadow:0 0 0 0.6px #0a1424,0 1.5px 3px rgba(5,12,40,.75);"></div>
<div style="left:392.5px;top:234.5px;width:77.5px;height:17.1px;background:linear-gradient(100deg,rgba(98,148,84,.95) 0,rgba(76,122,74,.9) 40%,rgba(42,78,60,.85) 100%),#16222e;border-radius:3px 3px 0 0;box-shadow:inset 0 1px 0 rgba(170,215,150,.55);"></div>
<div style="left:392px;top:247.6px;width:78.5px;height:4px;background:linear-gradient(rgba(20,34,44,0),rgba(20,34,44,.55));"></div>
<span style="left:398.2px;top:235.46px;font-size:9.5px;line-height:11.88px;color:#e9f3e2;font-weight:normal;font-style:italic;">ƒ</span>
<span style="left:404.5px;top:236.91px;font-size:5.9px;line-height:7.38px;color:#f1f6ee;letter-spacing:0px;text-shadow:0 0.6px 0.8px #1a3018;">Set Operator Field</span>
<span style="left:404.5px;top:244.04px;font-size:5.7px;line-height:7.12px;color:#86b078;font-weight:normal;font-style:italic;letter-spacing:0.08px;">Target is Operator Field</span>
<svg style="left:395.7px;top:254.8px" width="9" height="8" viewBox="0 0 9 8"><circle cx="3.8" cy="4" r="3.05" fill="#2aa4f2"/><path d="M6.2 2.2 L8.2 4 L6.2 5.8Z" fill="#2aa4f2"/></svg>
<span style="left:406px;top:256.01px;font-size:5.9px;line-height:7.38px;color:#eef1f6;transform-origin:0 50%;transform:scaleX(0.966);text-shadow:0 0 1px #000;">Target</span>
<svg style="left:395.7px;top:267px" width="9" height="8" viewBox="0 0 9 8"><circle cx="3.8" cy="4" r="2.4" fill="#0c1610" stroke="#7fd32a" stroke-width="1.4"/><path d="M6.6 2.6 L8.2 4 L6.6 5.4Z" fill="#7fd32a"/></svg>
<span style="left:406px;top:268.21px;font-size:5.9px;line-height:7.38px;color:#eef1f6;transform-origin:0 50%;transform:scaleX(0.939);text-shadow:0 0 1px #000;">Magnitude</span>
<div style="left:436px;top:266.6px;width:14.2px;height:9.4px;background:#101a26;border:1px solid #e6e9ee;border-radius:1.5px;"></div>
<span style="left:439.2px;top:268.38px;font-size:5.8px;line-height:7.25px;color:#e8ebf0;transform-origin:0 50%;transform:scaleX(0.943);">1.0</span>
<svg style="left:395.7px;top:280.8px" width="9" height="8" viewBox="0 0 9 8"><circle cx="3.8" cy="4" r="3.05" fill="#2aa4f2"/><path d="M6.2 2.2 L8.2 4 L6.2 5.8Z" fill="#2aa4f2"/></svg>
<span style="left:406px;top:282.01px;font-size:5.9px;line-height:7.38px;color:#eef1f6;transform-origin:0 50%;transform:scaleX(0.932);text-shadow:0 0 1px #000;">Right Field</span>
<svg style="left:395.7px;top:292.8px" width="9" height="8" viewBox="0 0 9 8"><circle cx="3.8" cy="4" r="3.05" fill="#2aa4f2"/><path d="M6.2 2.2 L8.2 4 L6.2 5.8Z" fill="#2aa4f2"/></svg>
<span style="left:406px;top:294.01px;font-size:5.9px;line-height:7.38px;color:#eef1f6;transform-origin:0 50%;transform:scaleX(0.915);text-shadow:0 0 1px #000;">Left Field</span>
<span style="left:406px;top:305.38px;font-size:5.8px;line-height:7.25px;color:#e8ebf0;transform-origin:0 50%;transform:scaleX(0.913);">Operation</span>
<svg style="left:396.6px;top:313.4px" width="7" height="6" viewBox="0 0 7 6"><circle cx="3" cy="3" r="2.4" fill="#1b2a44"/></svg>
<div style="left:408px;top:312px;width:62.5px;height:10.2px;background:linear-gradient(#f4f4f4,#d4d4d4);border-radius:1.5px 0 0 1.5px;"></div>
<span style="left:411px;top:313.45px;font-size:6px;line-height:7.5px;color:#4a4a4a;font-weight:normal;transform-origin:0 50%;transform:scaleX(0.910);">Multiply</span>
<div style="left:221.5px;top:344.9px;width:115.5px;height:56.9px;background:linear-gradient(#152131,#0f1926);border-radius:3px;box-shadow:0 0 0 0.6px #0a1424,0 1.5px 3px rgba(5,12,40,.75);"></div>
<div style="left:221.5px;top:344.9px;width:115.5px;height:17.1px;background:linear-gradient(100deg,rgba(98,148,84,.95) 0,rgba(76,122,74,.9) 40%,rgba(42,78,60,.85) 100%),#16222e;border-radius:3px 3px 0 0;box-shadow:inset 0 1px 0 rgba(170,215,150,.55);"></div>
<div style="left:221px;top:358px;width:116.5px;height:4px;background:linear-gradient(rgba(20,34,44,0),rgba(20,34,44,.55));"></div>
<span style="left:227.2px;top:345.86px;font-size:9.5px;line-height:11.88px;color:#e9f3e2;font-weight:normal;font-style:italic;">ƒ</span>
<span style="left:234.5px;top:347.31px;font-size:5.9px;line-height:7.38px;color:#f1f6ee;letter-spacing:0.05px;text-shadow:0 0.6px 0.8px #1a3018;">Set Uniform Vector</span>
<span style="left:234.5px;top:354.44px;font-size:5.7px;line-height:7.12px;color:#86b078;font-weight:normal;font-style:italic;letter-spacing:0.06px;">Target is Uniform Vector</span>
<svg style="left:225.4px;top:365.6px" width="9" height="8" viewBox="0 0 9 8"><circle cx="3.8" cy="4" r="3.05" fill="#2aa4f2"/><path d="M6.2 2.2 L8.2 4 L6.2 5.8Z" fill="#2aa4f2"/></svg>
<span style="left:235.7px;top:366.81px;font-size:5.9px;line-height:7.38px;color:#eef1f6;transform-origin:0 50%;transform:scaleX(0.904);text-shadow:0 0 1px #000;">Target</span>
<span style="left:289.7px;top:366.81px;font-size:5.9px;line-height:7.38px;color:#eef1f6;transform-origin:0 50%;transform:scaleX(0.912);text-shadow:0 0 1px #000;">Return Value</span>
<svg style="left:324.6px;top:365.6px" width="9" height="8" viewBox="0 0 9 8"><circle cx="3.8" cy="4" r="3.05" fill="#2aa4f2"/><path d="M6.2 2.2 L8.2 4 L6.2 5.8Z" fill="#2aa4f2"/></svg>
<svg style="left:225.4px;top:378.6px" width="9" height="8" viewBox="0 0 9 8"><circle cx="3.8" cy="4" r="2.4" fill="#0c1610" stroke="#7fd32a" stroke-width="1.4"/><path d="M6.6 2.6 L8.2 4 L6.6 5.4Z" fill="#7fd32a"/></svg>
<span style="left:235px;top:379.81px;font-size:5.9px;line-height:7.38px;color:#eef1f6;transform-origin:0 50%;transform:scaleX(0.949);text-shadow:0 0 1px #000;">Magnitude</span>
<div style="left:264.7px;top:378.4px;width:14.2px;height:8.8px;background:#101a26;border:1px solid #e6e9ee;border-radius:1.5px;"></div>
<span style="left:267.9px;top:379.87px;font-size:5.8px;line-height:7.25px;color:#e8ebf0;transform-origin:0 50%;transform:scaleX(0.943);">1.0</span>
<svg style="left:225.4px;top:391.6px" width="9" height="8" viewBox="0 0 9 8"><circle cx="3.8" cy="4" r="3.05" fill="#f7c62a"/><path d="M6.2 2.2 L8.2 4 L6.2 5.8Z" fill="#f7c62a"/></svg>
<span style="left:235px;top:392.81px;font-size:5.9px;line-height:7.38px;color:#eef1f6;transform-origin:0 50%;transform:scaleX(0.892);text-shadow:0 0 1px #000;">Direction</span>
<span style="left:338.6px;top:450.75px;font-size:27.6px;line-height:34.5px;color:#456a9f;transform-origin:0 50%;transform:scaleX(0.870);-webkit-text-stroke:0.8px #456a9f;">BLUEPRINT</span>
<div style="left:468.8px;top:1.6px;width:1.2px;height:487.4px;background:#15171c;"></div>
<div style="left:89.7px;top:343.6px;width:3.2px;height:147.4px;background:#16181f;"></div>
<div style="left:0px;top:488.8px;width:470px;height:1.8px;background:#4c4c4c;"></div>
</div></div><!--/bp-->
  <div class="t" style="top:536px">蓝图可视化脚本编制系统</div>
  <div class="l" style="top:575px">通过对设计师更友好的蓝图可视化脚本，你可以快速地</div>
  <div class="l" style="top:598px">制作原型和交付交互式内容，而不必接触一行代码。使</div>
  <div class="l" style="top:621px">用蓝图可以构建对象行为和交互，修改用户界面，调整</div>
  <div class="l" style="top:644px">输入控制，等等。在测试作品的时候，可使用强大的内</div>
  <div class="l" style="top:667px">置调试器使游戏性流程可视化并检查属性。</div>
</div>
</body>
</html>
